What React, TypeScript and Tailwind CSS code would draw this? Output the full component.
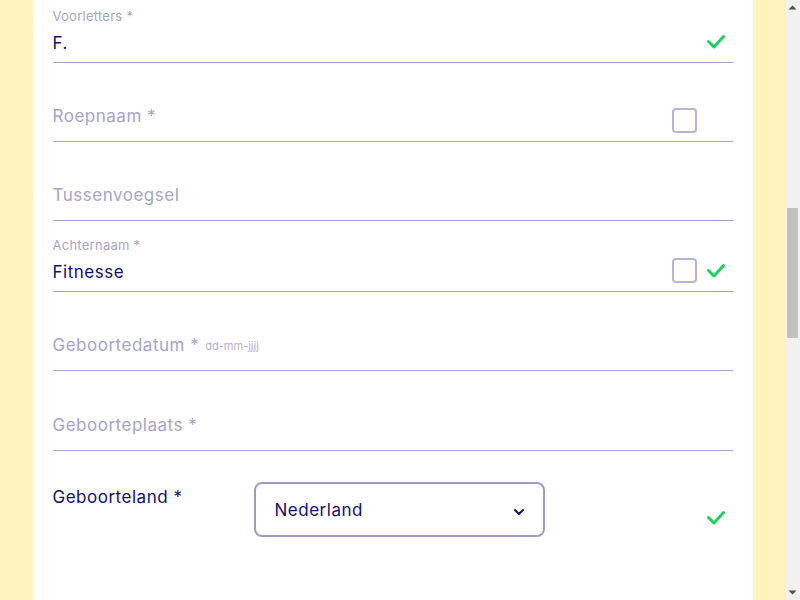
import React, { useEffect, useRef } from "react";

const SCROLL = 870;

function Check() {
  return (
    <svg width="18" height="16" viewBox="0 0 18 16" fill="none">
      <polyline points="1.5,7.5 7,13 16.5,2.5" stroke="#1fd15c" strokeWidth="3" strokeLinecap="round" strokeLinejoin="round" />
    </svg>
  );
}

function Trailing({ box, check }: { box?: boolean; check?: boolean }) {
  return (
    <div className="ml-auto mr-[8px] mb-[8px] flex h-[25px] items-center gap-[10px] self-end">
      {box && <div className="h-[25px] w-[25px] rounded-[4px] border-2 border-[#b6b4da] bg-white" />}
      <div className="flex w-[18px] items-center justify-center">{check && <Check />}</div>
    </div>
  );
}

function Filled({ label, value, box, check }: { label: string; value: string; box?: boolean; check?: boolean }) {
  return (
    <div className="flex h-[71px] border-b border-[#a4a1cd]">
      <div className="flex flex-col justify-end pb-[9px]">
        <div className="text-[13px] leading-[16px] tracking-[0.02em] text-[#a6a3cc]">{label}</div>
        <div className="mt-[9px] text-[17px] leading-[20px] tracking-[0.03em] text-[#140f6e]">{value}</div>
      </div>
      <Trailing box={box} check={check} />
    </div>
  );
}

function Empty({ label, hint, box, h }: { label: string; hint?: string; box?: boolean; h: string }) {
  return (
    <div className={`flex border-b border-[#a4a1cd] ${h}`}>
      <div className="flex items-end pb-[15px]">
        <span className="text-[17px] leading-[20px] tracking-[0.03em] text-[#a6a3cc]">{label}</span>
        {hint && <span className="ml-[6px] pb-[2px] text-[11px] leading-[14px] text-[#b3b0d4]">{hint}</span>}
      </div>
      <Trailing box={box} />
    </div>
  );
}

function Scrollbar() {
  return (
    <div className="flex h-[600px] w-[15px] shrink-0 flex-col items-center bg-[#f1f1f1]">
      <svg className="mt-[5px]" width="9" height="5" viewBox="0 0 9 5">
        <polygon points="0.5,4.5 4.5,0.5 8.5,4.5" fill="#505050" />
      </svg>
      <div className="mt-[198px] h-[130px] w-[11px] bg-[#c1c1c1]" />
      <svg className="mt-auto mb-[5px]" width="9" height="5" viewBox="0 0 9 5">
        <polygon points="0.5,0.5 8.5,0.5 4.5,4.5" fill="#505050" />
      </svg>
    </div>
  );
}

export default function App() {
  const ref = useRef<HTMLDivElement | null>(null);
  useEffect(() => {
    const set = () => {
      if (ref.current) ref.current.scrollTop = SCROLL;
    };
    set();
    const id = requestAnimationFrame(set);
    const t = setTimeout(set, 50);
    return () => {
      cancelAnimationFrame(id);
      clearTimeout(t);
    };
  }, []);

  return (
    <div className="flex h-[600px] w-[800px] overflow-hidden" style={{ fontFamily: "Inter, 'Noto Sans', sans-serif" }}>
      <div
        ref={(el) => {
          ref.current = el;
          if (el) el.scrollTop = SCROLL;
        }}
        className="h-[600px] flex-1 overflow-hidden bg-[#fff4bd]"
      >
        <div className="mx-auto w-[720px] bg-white px-5">
          <div className="h-[862px]" />
          <Filled label="Voorletters *" value="F." check />
          <Empty label="Roepnaam *" box h="h-[79px]" />
          <Empty label="Tussenvoegsel" h="h-[79px]" />
          <Filled label="Achternaam *" value="Fitnesse" box check />
          <Empty label="Geboortedatum *" hint="dd-mm-jjjj" h="h-[79px]" />
          <Empty label="Geboorteplaats *" h="h-[80px]" />
          <div className="mt-[31px] flex">
            <div className="w-[201px] pt-[5px] text-[17px] leading-[20px] tracking-[0.03em] text-[#140f6e]">Geboorteland *</div>
            <div className="flex h-[55px] w-[291px] items-center rounded-[8px] border-2 border-[#9e9bc9] pl-[19px] pr-[18px]">
              <span className="text-[17px] leading-[20px] tracking-[0.03em] text-[#140f6e]">Nederland</span>
              <svg className="ml-auto mt-[4px]" width="12" height="8" viewBox="0 0 12 8" fill="none">
                <polyline points="2,2 6,6 10,2" stroke="#140f6e" strokeWidth="2" strokeLinecap="round" strokeLinejoin="round" />
              </svg>
            </div>
            <div className="ml-auto mr-[8px] mt-[28px] flex h-[16px] w-[18px]">
              <Check />
            </div>
          </div>
          <div className="h-[1598px]" />
        </div>
      </div>
      <Scrollbar />
    </div>
  );
}
